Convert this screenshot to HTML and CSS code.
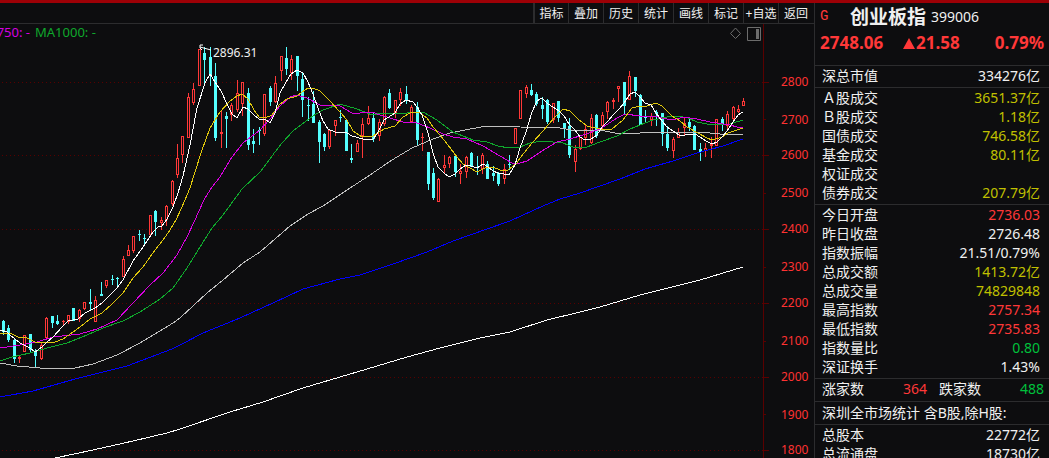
FILE: index.html
```html
<!DOCTYPE html>
<html lang="zh-CN">
<head>
<meta charset="utf-8">
<title>创业板指 399006</title>
<link rel="stylesheet" href="styles.css">
</head>
<body>
<div class="app">
  <main class="market">
    <nav class="toolbar">
      <button class="tool" type="button">指标</button>
      <button class="tool" type="button">叠加</button>
      <button class="tool" type="button">历史</button>
      <button class="tool" type="button">统计</button>
      <button class="tool" type="button">画线</button>
      <button class="tool" type="button">标记</button>
      <button class="tool" type="button">+自选</button>
      <button class="tool" type="button">返回</button>
    </nav>
    <svg class="chart" viewBox="0 24 814 434" preserveAspectRatio="xMaxYMin slice" role="img" aria-label="K线图">
      <g class="grid">
        <path class="grid-dots" d="M2 82.5H763M2 155.5H763M2 229.5H763M2 303.5H763M2 377.5H763M2 450.5H763"/>
        <path class="grid-axis" d="M763.5 24V458M763 82.5h6M763 119.5h3M763 155.5h6M763 193.5h3M763 229.5h6M763 267.5h3M763 303.5h6M763 341.5h3M763 377.5h6M763 414.5h3M763 450.5h6"/>
      </g>
      <g class="axis-labels">
        <text x="781" y="86">2800</text>
        <text x="781" y="124">2700</text>
        <text x="781" y="159">2600</text>
        <text x="781" y="197">2500</text>
        <text x="781" y="233">2400</text>
        <text x="781" y="271">2300</text>
        <text x="781" y="307">2200</text>
        <text x="781" y="345">2100</text>
        <text x="781" y="381">2000</text>
        <text x="781" y="419">1900</text>
        <text x="781" y="454">1800</text>
      </g>
      <g id="candles"></g>
      <g class="averages">
        <polyline class="ma-silver" points="0,363 17,366 40,368 75,368 93,364 117,355 140,343 173,323 180,318 207,293 223,280 243,263 260,252 290,226 308,214 323,206 347,190 367,177 392,160 412,148 433,139 450,133 470,129 487,126 520,127 560,128 577,131 600,130 615,133 640,133 653,132 683,132 710,133 720,134 743,134"/>
        <polyline class="ma-green" points="0,361 12,357 30,353 47,348 67,343 87,335 103,328 123,321 140,312 160,299 173,288 187,268 200,247 212,228 223,215 242,189 260,172 267,163 275,152 282,143 293,131 313,116 323,110 340,104 357,109 372,115 383,113 407,113 423,112 437,120 453,132 473,140 487,142 498,146 509,148 520,147 530,143 542,141 563,143 573,147 587,147 600,142 617,136 630,129 640,125 653,120 667,117 677,116 688,118 697,122 707,124 727,125 733,123 743,120"/>
        <polyline class="ma-violet" points="0,348 20,345 37,342 53,337 80,334 97,329 117,320 133,303 150,285 163,273 177,255 187,237 195,220 198,213 205,198 212,187 220,177 232,157 243,143 260,130 270,119 280,106 290,97 297,95 307,98 320,105 340,106 352,113 360,113 372,112 380,115 390,118 403,122 417,123 430,128 443,134 453,137 467,139 483,146 500,156 512,163 520,163 527,161 542,151 557,142 570,139 583,135 600,129 617,118 625,114 640,116 653,116 667,119 673,120 683,117 697,119 710,122 730,125 737,127 743,127"/>
        <polyline class="ma-yellow" points="0,333 10,333 18,337 25,337 35,342 42,343 55,342 63,339 73,332 80,327 90,319 102,313 112,304 123,293 133,278 143,267 155,250 163,240 170,230 176,220 182,207 190,188 195,172 202,150 210,128 220,112 230,101 237,96 242,94 248,99 254,110 259,117 265,118 272,115 280,104 287,99 297,96 302,92 308,88 313,88 320,91 330,101 340,112 347,120 353,131 362,137 373,136 384,129 395,126 403,117 412,112 420,113 427,118 433,127 440,135 448,145 457,157 463,164 470,168 477,172 487,167 493,167 500,170 508,170 517,163 520,158 532,143 543,131 555,117 563,109 570,111 578,119 587,126 600,129 612,129 623,120 632,108 640,106 647,106 656,103 662,106 672,116 680,121 687,127 698,133 707,138 712,140 722,137 728,133 743,128"/>
        <polyline class="ma-blue" points="0,397 33,391 75,379 127,366 172,349 180,345 203,333 240,318 273,303 303,289 340,279 360,275 393,264 427,252 453,241 487,229 510,221 543,206 560,199 580,193 600,186 620,179 645,169 673,161 697,153 723,146 743,139"/>
        <polyline class="ma-white" points="55,458 93,450 133,441 167,433 180,429 230,412 263,402 303,388 340,377 367,369 407,357 440,348 480,338 510,332 547,320 580,312 600,307 640,295 700,280 743,267"/>
        <polyline class="ma-white" points="0,330 7,332 10,335 20,343 30,348 35,352 42,347 47,342 53,337 63,326 68,321 78,319 85,313 95,308 102,303 110,295 117,288 123,280 133,261 143,247 153,232 158,227 162,226 167,219 173,207 178,193 183,176 190,145 197,108 205,83 210,74 215,82 221,91 227,104 232,114 237,118 243,107 248,109 254,115 259,119 265,119 270,123 275,113 280,93 286,82 291,74 297,70 303,73 308,82 313,94 318,108 323,121 328,129 335,132 342,132 347,133 352,136 363,139 373,139 377,134 384,120 395,113 400,104 406,100 413,102 417,107 422,115 428,133 433,153 438,167 444,173 449,177 455,174 460,169 466,165 471,166 477,168 483,164 488,167 493,171 498,173 504,174 509,175 515,165 520,148 526,132 532,112 537,101 542,98 548,104 553,107 559,111 564,116 569,124 575,130 580,137 585,140 591,139 597,135 602,127 608,121 613,115 619,109 624,103 630,94 635,92 640,97 645,103 651,105 656,113 662,121 667,127 673,131 679,135 685,135 690,134 695,134 700,137 706,141 712,144 717,142 722,137 727,131 733,122 738,115 743,112"/>
      </g>
      <path class="peak-mark" d="M211 50L200 47M203 45H200V48L202 50"/>
      <text class="peak-label" x="213" y="57">2896.31</text>
      <text class="legend-violet" x="30" y="37">750: -</text>
      <text class="legend-green" x="35" y="37">MA1000: -</text>
      <path class="view-icon" d="M735.5 28L740.5 33.5L735.5 38.5L730.5 33.5ZM747.5 27.5H760.5V40.5H747.5Z"/>
      <path class="view-icon-fill" d="M756 29h3v10h-3z"/>
    </svg>
  </main>

  <aside class="quote">
    <header class="quote-head">
      <div class="quote-title">
        <span class="flag">G</span>
        <h1 class="name">创业板指</h1>
        <span class="code">399006</span>
      </div>
      <div class="quote-price up">
        <span>2748.06</span>
        <span class="change"><svg class="arrow" viewBox="0 0 12 11" aria-hidden="true"><path d="M6 0L12 11H0Z"/></svg>21.58</span>
        <span class="percent">0.79%</span>
      </div>
    </header>
    <table class="group">
      <tr><th scope="row">深总市值</th><td>334276亿</td></tr>
    </table>
    <table class="group">
      <tr><th scope="row">Ａ股成交</th><td class="amount">3651.37亿</td></tr>
      <tr><th scope="row">Ｂ股成交</th><td class="amount">1.18亿</td></tr>
      <tr><th scope="row">国债成交</th><td class="amount">746.58亿</td></tr>
      <tr><th scope="row">基金成交</th><td class="amount">80.11亿</td></tr>
      <tr><th scope="row">权证成交</th><td></td></tr>
      <tr><th scope="row">债券成交</th><td class="amount">207.79亿</td></tr>
    </table>
    <table class="group">
      <tr><th scope="row">今日开盘</th><td class="up">2736.03</td></tr>
      <tr><th scope="row">昨日收盘</th><td>2726.48</td></tr>
      <tr><th scope="row">指数振幅</th><td>21.51/0.79%</td></tr>
      <tr><th scope="row">总成交额</th><td class="amount">1413.72亿</td></tr>
      <tr><th scope="row">总成交量</th><td class="amount">74829848</td></tr>
      <tr><th scope="row">最高指数</th><td class="up">2757.34</td></tr>
      <tr><th scope="row">最低指数</th><td class="up">2735.83</td></tr>
      <tr><th scope="row">指数量比</th><td class="down">0.80</td></tr>
      <tr><th scope="row">深证换手</th><td>1.43%</td></tr>
    </table>
    <div class="breadth">
      <span>涨家数</span><span class="count up">364</span>
      <span>跌家数</span><span class="count down">488</span>
    </div>
    <p class="note">深圳全市场统计 含B股,除H股:</p>
    <table class="group">
      <tr><th scope="row">总股本</th><td>22772亿</td></tr>
      <tr><th scope="row">总流通盘</th><td>18730亿</td></tr>
    </table>
  </aside>
</div>
<script src="chart.js"></script>
</body>
</html>
```

FILE: styles.css
```css
* {
  box-sizing: border-box;
}

body {
  margin: 0;
  background: #0d0d0f;
  color: #f0f0f0;
  font: 14px/19px "Noto Sans", "Noto Sans CJK SC", sans-serif;
}

.app {
  display: flex;
  height: 100vh;
  overflow: hidden;
  border-top: 3px solid #9c0006;
}

.market {
  flex: 1;
  min-width: 0;
  display: flex;
  flex-direction: column;
}

.toolbar {
  display: flex;
  justify-content: flex-end;
  height: 21px;
  flex: none;
  padding-right: 1px;
  border-bottom: 1px solid #2c2c2e;
}

.tool {
  width: 35px;
  padding: 0;
  border: 0;
  border-left: 1px solid #2c2c2e;
  background: none;
  color: #f0f0f0;
  font: 12px/19px "Noto Sans", "Noto Sans CJK SC", sans-serif;
  white-space: nowrap;
}

.tool:first-child {
  border-left-width: 2px;
}

.chart {
  display: block;
  width: 100%;
  flex: 1;
  min-height: 0;
  font-size: 12px;
}

.grid path,
.averages polyline,
.peak-mark,
.view-icon {
  fill: none;
  stroke-width: 1;
}

.grid path,
.averages polyline {
  shape-rendering: crispEdges;
}

.grid-dots {
  stroke: #580000;
  stroke-dasharray: 1 3;
}

.grid-axis {
  stroke: #5a0000;
}

.axis-labels {
  fill: #ff3232;
}

.ma-white { stroke: #ffffff; }
.ma-yellow { stroke: #e0c80c; }
.ma-violet { stroke: #d800e0; }
.ma-green { stroke: #0fa82c; }
.ma-silver { stroke: #c0c0c0; }
.ma-blue { stroke: #0000ff; }

.candle {
  shape-rendering: crispEdges;
}

.rise { fill: #ff3838; }
.fall { fill: #54ffff; }
.hollow { fill: #0d0d0f; }

.peak-mark { stroke: #ffffff; }
.peak-label { fill: #f0f0f0; }

.legend-violet,
.legend-green {
  font-size: 13px;
}

.legend-violet {
  fill: #d800e0;
  text-anchor: end;
}

.legend-green { fill: #0fa82c; }
.view-icon { stroke: #6c6c6c; }
.view-icon-fill { fill: #6c6c6c; }

.quote {
  width: 235px;
  flex: none;
  border-left: 1px solid #2c2c2e;
}

.quote-head {
  height: 62px;
  padding: 0 5px;
}

.quote-title {
  display: flex;
  align-items: center;
  height: 27px;
}

.flag {
  width: 30px;
  color: #ff3838;
  font: 14px/19px "Liberation Mono", monospace;
}

.name {
  margin: 0 5px 0 0;
  font-size: 19px;
  line-height: 24px;
  font-weight: 700;
}

.quote-price {
  display: grid;
  grid-template-columns: 83px 1fr auto;
  font-size: 17px;
  line-height: 26px;
  font-weight: 700;
}

.arrow {
  width: 12px;
  height: 11px;
  margin-right: 1px;
  fill: #ff3838;
}

.group {
  width: 100%;
  padding: 0 9px 2px 7px;
  border-top: 1px solid #2c2c2e;
  border-spacing: 0;
}

.group th,
.group td {
  height: 19px;
  padding: 0;
  font-weight: 400;
  text-align: left;
  white-space: nowrap;
}

.group td {
  text-align: right;
}

.breadth,
.note {
  margin: 0;
  padding: 1px 5px 2px 7px;
  border-top: 1px solid #2c2c2e;
}

.breadth {
  display: grid;
  grid-template-columns: 42px 63px 54px 1fr;
  padding: 0 5px 3px 7px;
}

.breadth span:nth-child(3) {
  padding-left: 12px;
}

.count {
  text-align: right;
}

.up { color: #ff3838; }
.down { color: #00c03c; }
.amount { color: #c0c000; }
```

FILE: chart.js
```js
// Each candle: direction, x, high, low, body top, body bottom.
const candles = `
c 3 320 335 321 332;c 8 325 342 328 340;c 14 339 363 340 359;r 19 356 363 357 359;r 24 335 352 335 352;c 30 334 353 334 350;
c 35 349 367 351 356;r 41 343 360 345 359;r 46 317 338 318 338;c 52 316 328 316 323;c 57 315 325 321 324;r 63 320 326 321 322;
r 68 315 324 315 322;c 73 308 321 308 321;r 79 309 322 310 319;r 84 302 310 302 309;c 90 289 310 302 304;r 95 296 322 300 322;
c 101 282 296 294 296;r 106 280 288 280 286;c 112 275 285 279 280;c 117 277 288 278 279;r 123 256 277 259 277;r 128 245 256 250 256;
r 133 236 253 236 251;c 139 230 241 234 235;c 144 234 244 238 239;r 150 215 235 215 235;c 155 210 236 211 222;r 161 217 230 220 223;
r 166 205 226 206 220;r 172 180 206 181 204;r 177 144 178 158 175;r 182 136 163 136 155;r 188 93 138 97 138;r 193 83 105 89 103;
r 199 49 86 49 86;c 204 47 86 53 60;c 210 47 86 57 75;c 215 63 141 76 138;r 221 110 148 132 134;c 226 112 148 116 119;
r 231 103 121 105 115;r 237 80 112 93 110;r 242 82 116 82 104;c 248 88 150 93 145;c 253 129 153 141 144;c 259 127 145 130 131;
r 264 94 136 94 134;c 270 86 106 88 102;r 275 76 103 83 102;r 281 56 81 56 71;c 286 47 75 58 69;r 291 55 80 59 73;
c 297 56 91 56 76;c 302 72 117 79 100;c 308 97 121 105 106;c 313 91 123 104 123;c 319 120 163 122 142;c 324 133 151 134 147;
r 329 129 149 130 147;r 335 120 136 120 126;c 340 110 122 117 118;c 346 120 151 120 151;c 351 144 163 158 160;r 357 140 152 143 152;
r 362 118 158 124 136;r 368 106 125 118 124;c 373 112 142 118 139;r 379 119 141 122 136;r 384 96 126 97 124;c 389 89 109 93 108;
r 395 100 118 100 113;r 400 88 106 92 100;c 406 86 104 94 101;r 411 105 122 107 122;c 417 102 145 107 140;r 422 133 151 137 138;
c 428 152 190 152 184;c 433 168 200 173 198;r 438 178 202 179 202;r 444 155 174 165 168;r 449 156 168 157 164;c 455 156 177 156 172;
r 460 164 184 171 174;r 466 156 178 157 172;c 471 152 167 153 167;c 477 156 175 167 168;r 482 153 174 155 169;c 487 161 179 164 179;
c 493 166 181 173 176;c 498 172 186 173 184;r 504 164 184 169 179;c 509 155 170 164 165;r 515 128 144 128 144;r 520 90 119 90 119;
r 526 85 98 87 94;c 531 84 96 90 95;c 536 92 106 94 104;c 542 97 119 105 109;c 547 99 124 100 122;r 553 103 123 103 120;
c 558 101 122 101 118;c 564 123 138 123 129;c 569 118 158 126 155;r 575 145 172 149 162;r 580 137 150 137 149;r 585 125 145 129 138;
r 591 114 144 118 143;c 596 114 138 115 136;r 602 112 130 115 126;r 607 101 119 102 112;r 613 98 109 100 102;r 618 86 102 86 89;
c 624 82 114 82 106;r 629 71 100 76 100;c 635 77 97 77 91;c 640 94 125 95 125;c 645 110 123 117 118;r 651 113 126 116 120;
c 656 110 126 112 114;c 662 113 146 113 134;c 667 126 151 134 148;r 673 137 158 139 151;r 678 128 138 132 138;r 684 117 136 123 128;
c 689 118 131 122 127;c 694 125 150 126 150;c 700 143 161 149 152;r 705 143 157 148 151;r 711 137 158 144 146;r 716 119 146 119 146;
c 722 117 131 119 124;r 727 111 129 114 126;r 733 106 120 107 119;r 738 105 113 109 112;r 743 98 106 101 106
`.trim().split(";").map(row => row.trim().split(" "));

const layer = document.getElementById("candles");

function addRect(kind, x, y, width, height) {
  const rect = document.createElementNS("http://www.w3.org/2000/svg", "rect");
  rect.setAttribute("class", "candle " + kind);
  rect.setAttribute("x", x);
  rect.setAttribute("y", y);
  rect.setAttribute("width", width);
  rect.setAttribute("height", height);
  layer.append(rect);
}

for (const [direction, ...numbers] of candles) {
  const [x, high, low, top, bottom] = numbers.map(Number);
  const kind = direction === "r" ? "rise" : "fall";
  addRect(kind, x, high, 1, low - high);
  addRect(kind, x - 1, top, 3, bottom - top);
  if (direction === "r" && bottom - top > 2) {
    addRect("hollow", x, top + 1, 1, bottom - top - 2);
  }
}
```
